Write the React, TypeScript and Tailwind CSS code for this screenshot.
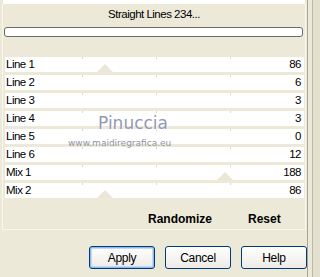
import type { ReactNode } from "react";

const rows: { label: string; value: number; thumb?: number }[] = [
  { label: "Line 1", value: 86, thumb: 97 },
  { label: "Line 2", value: 6 },
  { label: "Line 3", value: 3 },
  { label: "Line 4", value: 3 },
  { label: "Line 5", value: 0 },
  { label: "Line 6", value: 12 },
  { label: "Mix 1", value: 188, thumb: 217 },
  { label: "Mix 2", value: 86, thumb: 97 },
];

export default function App() {
  return (
    <div className="relative flex h-[277px] w-[320px] overflow-hidden bg-[#ece9d8] font-['Liberation_Sans',Arial,sans-serif] text-[11.5px] tracking-[-0.5px] text-black">
      <div className="flex w-[307px] flex-col">
        <div className="ml-[3px] mr-[2px] h-[4px] bg-white" />
        <div className="ml-[2px] mr-[1px] flex h-[226px] flex-col border-b border-l border-r border-[#f8f7f1] bg-[#ece9d8]">
          <div className="pt-[4px] text-center leading-[13px]">Straight Lines 234...</div>
          <div className="ml-[1px] mr-[2px] mt-[6px] h-[10px] rounded-[3px] border border-[#6b6b6b] bg-white" />
          <div className="mt-[20px] flex flex-col gap-[3px] pl-[2px] pr-[1px]">
            {rows.map((r) => (
              <Row key={r.label} label={r.label} value={r.value} thumb={r.thumb} />
            ))}
          </div>
          <div className="mt-[14px] flex pl-[145px] text-[12px] font-bold tracking-normal leading-[14px]">
            <span>Randomize</span>
            <span className="ml-[36px]">Reset</span>
          </div>
        </div>
        <div className="mt-[16px] flex gap-[10px] pl-[89px]">
          <XpButton primary>Apply</XpButton>
          <XpButton>Cancel</XpButton>
          <XpButton>Help</XpButton>
        </div>
      </div>
      <div className="flex w-[13px] border-l border-[#a7a596]">
        <div className="w-[4px] bg-[#ece9d8]" />
        <div className="flex-1 border-l border-[#b9b7a8] bg-[#e3e0cf]" />
      </div>
      <span className="pointer-events-none absolute left-[98px] top-[114px] font-['DejaVu_Sans',sans-serif] text-[17px] leading-[18px] tracking-normal text-[#9399b4] [text-shadow:1px_1px_0_#ffffff]">
        Pinuccia
      </span>
      <span className="pointer-events-none absolute left-[68px] top-[137px] font-['DejaVu_Sans',sans-serif] text-[9px] leading-[12px] tracking-normal text-[#8f93a4]">
        www.maidiregrafica.eu
      </span>
    </div>
  );
}

function Row({ label, value, thumb }: { label: string; value: number; thumb?: number }) {
  return (
    <div className="relative flex h-[15px] items-center justify-between bg-white pl-[1px] pr-[3px] leading-[13px]">
      <span>{label}</span>
      <span>{value}</span>
      <span className="absolute left-[77px] top-0 h-[2px] w-px bg-[#dcd9cc]" />
      <span className="absolute left-[151px] top-0 h-[2px] w-px bg-[#dcd9cc]" />
      <span className="absolute left-[225px] top-0 h-[2px] w-px bg-[#dcd9cc]" />
      {thumb !== undefined && (
        <svg
          className="absolute bottom-0"
          style={{ left: thumb - 5 }}
          width="16"
          height="8"
          viewBox="0 0 16 8"
        >
          <polygon points="0,8 8,0 16,8" fill="#ebe7d6" />
        </svg>
      )}
    </div>
  );
}

function XpButton({ children, primary }: { children: ReactNode; primary?: boolean }) {
  return (
    <div
      className={
        "flex h-[23px] w-[67px] items-center justify-center rounded-[3px] border border-[#003c74] bg-gradient-to-b from-white to-[#ecebe6] text-[12px] tracking-[-0.3px] " +
        (primary ? "shadow-[inset_0_0_0_1px_#8fb7f0,inset_0_0_0_2px_#c4d9f7]" : "")
      }
    >
      {children}
    </div>
  );
}
